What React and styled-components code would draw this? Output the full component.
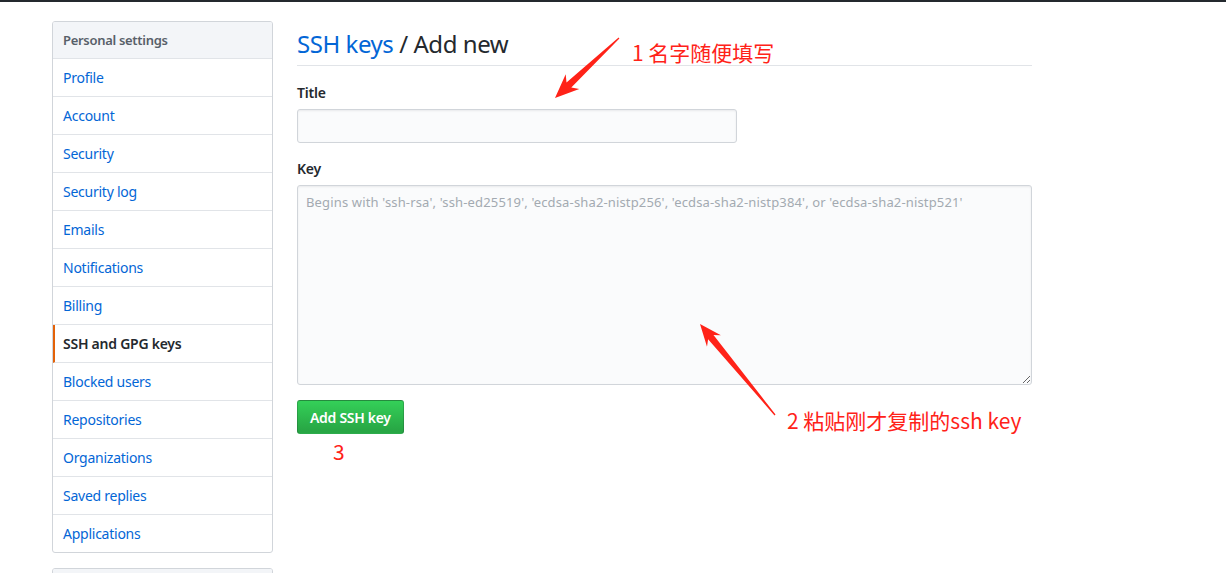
import React from 'react';
import styled, { createGlobalStyle } from 'styled-components';

const GlobalStyle = createGlobalStyle`
  html, body {
    margin: 0;
    padding: 0;
    background: #fff;
    overflow: hidden;
  }
  body {
    font-family: "Noto Sans", "Liberation Sans", sans-serif;
    font-size: 14px;
    line-height: 1.5;
    color: #24292e;
  }
`;

const TopBar = styled.div`
  height: 2px;
  background: #24292e;
`;

const Page = styled.div`
  position: relative;
  display: flex;
  align-items: flex-start;
  gap: 24px;
  padding: 19px 0 0 52px;
`;

const SideColumn = styled.div`
  width: 221px;
  flex-shrink: 0;
  display: flex;
  flex-direction: column;
  gap: 15px;
`;

const Menu = styled.nav`
  border: 1px solid #d1d5da;
  border-radius: 3px;
  background: #fff;
  overflow: hidden;
`;

const MenuHeading = styled.div`
  padding: 8px 10px;
  line-height: 20px;
  min-height: 20px;
  font-size: 13px;
  font-weight: 600;
  letter-spacing: -0.3px;
  color: #586069;
  background: #f3f5f8;
  border-bottom: 1px solid #e1e4e8;
`;

const MenuItem = styled.a`
  display: block;
  padding: 8px 10px 8px ${p => (p.$selected ? '8px' : '10px')};
  line-height: 21px;
  font-size: 14px;
  letter-spacing: -0.25px;
  color: ${p => (p.$selected ? '#24292e' : '#0366d6')};
  font-weight: ${p => (p.$selected ? 600 : 400)};
  text-decoration: none;
  border-left: ${p => (p.$selected ? '2px solid #e36209' : '0')};
  border-bottom: 1px solid #e1e4e8;

  &:last-child {
    border-bottom: 0;
  }
`;

const Main = styled.main`
  width: 735px;
  padding-top: 8px;
`;

const Subhead = styled.h2`
  margin: 0;
  padding-bottom: 6px;
  font-size: 24px;
  font-weight: 400;
  line-height: 30px;
  letter-spacing: -0.45px;
  border-bottom: 1px solid #e1e4e8;

  a {
    color: #0366d6;
    text-decoration: none;
  }
`;

const FormGroup = styled.div`
  margin-top: 16px;

  & + & {
    margin-top: 15px;
  }
`;

const Label = styled.label`
  display: block;
  font-weight: 600;
  font-size: 14px;
  line-height: 21px;
  letter-spacing: -0.2px;
  margin-bottom: 6px;
`;

const Input = styled.input`
  box-sizing: border-box;
  display: block;
  width: ${p => p.$width || '100%'};
  height: 34px;
  padding: 6px 8px;
  font: inherit;
  background: #fafbfc;
  border: 1px solid #d1d5da;
  border-radius: 3px;
  box-shadow: inset 0 1px 2px rgba(27, 31, 35, 0.075);
  outline: none;
`;

const TextArea = styled.textarea`
  box-sizing: border-box;
  display: block;
  width: 100%;
  height: 200px;
  padding: 6px 8px;
  font-family: "Noto Sans", "Liberation Sans", sans-serif;
  font-size: 13px;
  line-height: 20px;
  letter-spacing: 0.15px;
  background: #fafbfc;
  border: 1px solid #d1d5da;
  border-radius: 3px;
  box-shadow: inset 0 1px 2px rgba(27, 31, 35, 0.075);
  outline: none;
  resize: vertical;

  &::placeholder {
    color: #a3aab1;
  }
`;

const Button = styled.button`
  margin-top: 15px;
  height: 34px;
  padding: 0 12px;
  font-family: inherit;
  font-size: 14px;
  font-weight: 600;
  letter-spacing: -0.3px;
  color: #fff;
  background-image: linear-gradient(-180deg, #34d058 0%, #28a745 90%);
  border: 1px solid rgba(27, 31, 35, 0.2);
  border-radius: 3px;
  cursor: pointer;
`;

const Overlay = styled.svg`
  position: absolute;
  left: 0;
  top: 0;
  pointer-events: none;
`;

const Note = styled.span`
  position: absolute;
  left: ${p => p.$x}px;
  top: ${p => p.$y}px;
  font-family: "Noto Sans CJK SC", sans-serif;
  font-size: 21px;
  line-height: 1;
  color: #ff2218;
  white-space: nowrap;
`;

// tapered arrow from tail to tip
function arrowPoints(tx, ty, hx, hy, head = 24, barb = 10) {
  const dx = tx - hx;
  const dy = ty - hy;
  const len = Math.hypot(dx, dy);
  const ux = dx / len;
  const uy = dy / len;
  const vx = -uy;
  const vy = ux;
  const pt = (u, v) => `${(hx + ux * u + vx * v).toFixed(1)},${(hy + uy * u + vy * v).toFixed(1)}`;
  return [
    pt(0, 0),
    pt(head, barb),
    pt(head - 5, 3.5),
    pt(len, 0.6),
    pt(len, -0.6),
    pt(head - 5, -3.5),
    pt(head, -barb),
  ].join(' ');
}

const menuItems = [
  'Profile',
  'Account',
  'Security',
  'Security log',
  'Emails',
  'Notifications',
  'Billing',
  'SSH and GPG keys',
  'Blocked users',
  'Repositories',
  'Organizations',
  'Saved replies',
  'Applications',
];

export default function App() {
  return (
    <>
      <GlobalStyle />
      <TopBar />
      <Page>
        <SideColumn>
          <Menu>
            <MenuHeading>Personal settings</MenuHeading>
            {menuItems.map(item => (
              <MenuItem key={item} href="#" $selected={item === 'SSH and GPG keys'}>
                {item}
              </MenuItem>
            ))}
          </Menu>
          <Menu>
            <MenuHeading />
          </Menu>
        </SideColumn>

        <Main>
          <Subhead>
            <a href="#">SSH keys</a> / Add new
          </Subhead>
          <FormGroup>
            <Label>Title</Label>
            <Input $width="440px" />
          </FormGroup>
          <FormGroup>
            <Label>Key</Label>
            <TextArea placeholder="Begins with 'ssh-rsa', 'ssh-ed25519', 'ecdsa-sha2-nistp256', 'ecdsa-sha2-nistp384', or 'ecdsa-sha2-nistp521'" />
          </FormGroup>
          <Button>Add SSH key</Button>
        </Main>

        <Overlay width="1226" height="573">
          <polygon points={arrowPoints(619, 36, 555, 96)} fill="#ff2218" />
          <polygon points={arrowPoints(775, 413, 700, 322, 22, 9)} fill="#ff2218" />
        </Overlay>
        <Note $x={632} $y={40}>1 名字随便填写</Note>
        <Note $x={787} $y={408}>2 粘贴刚才复制的ssh key</Note>
        <Note $x={333} $y={439}>3</Note>
      </Page>
    </>
  );
}
